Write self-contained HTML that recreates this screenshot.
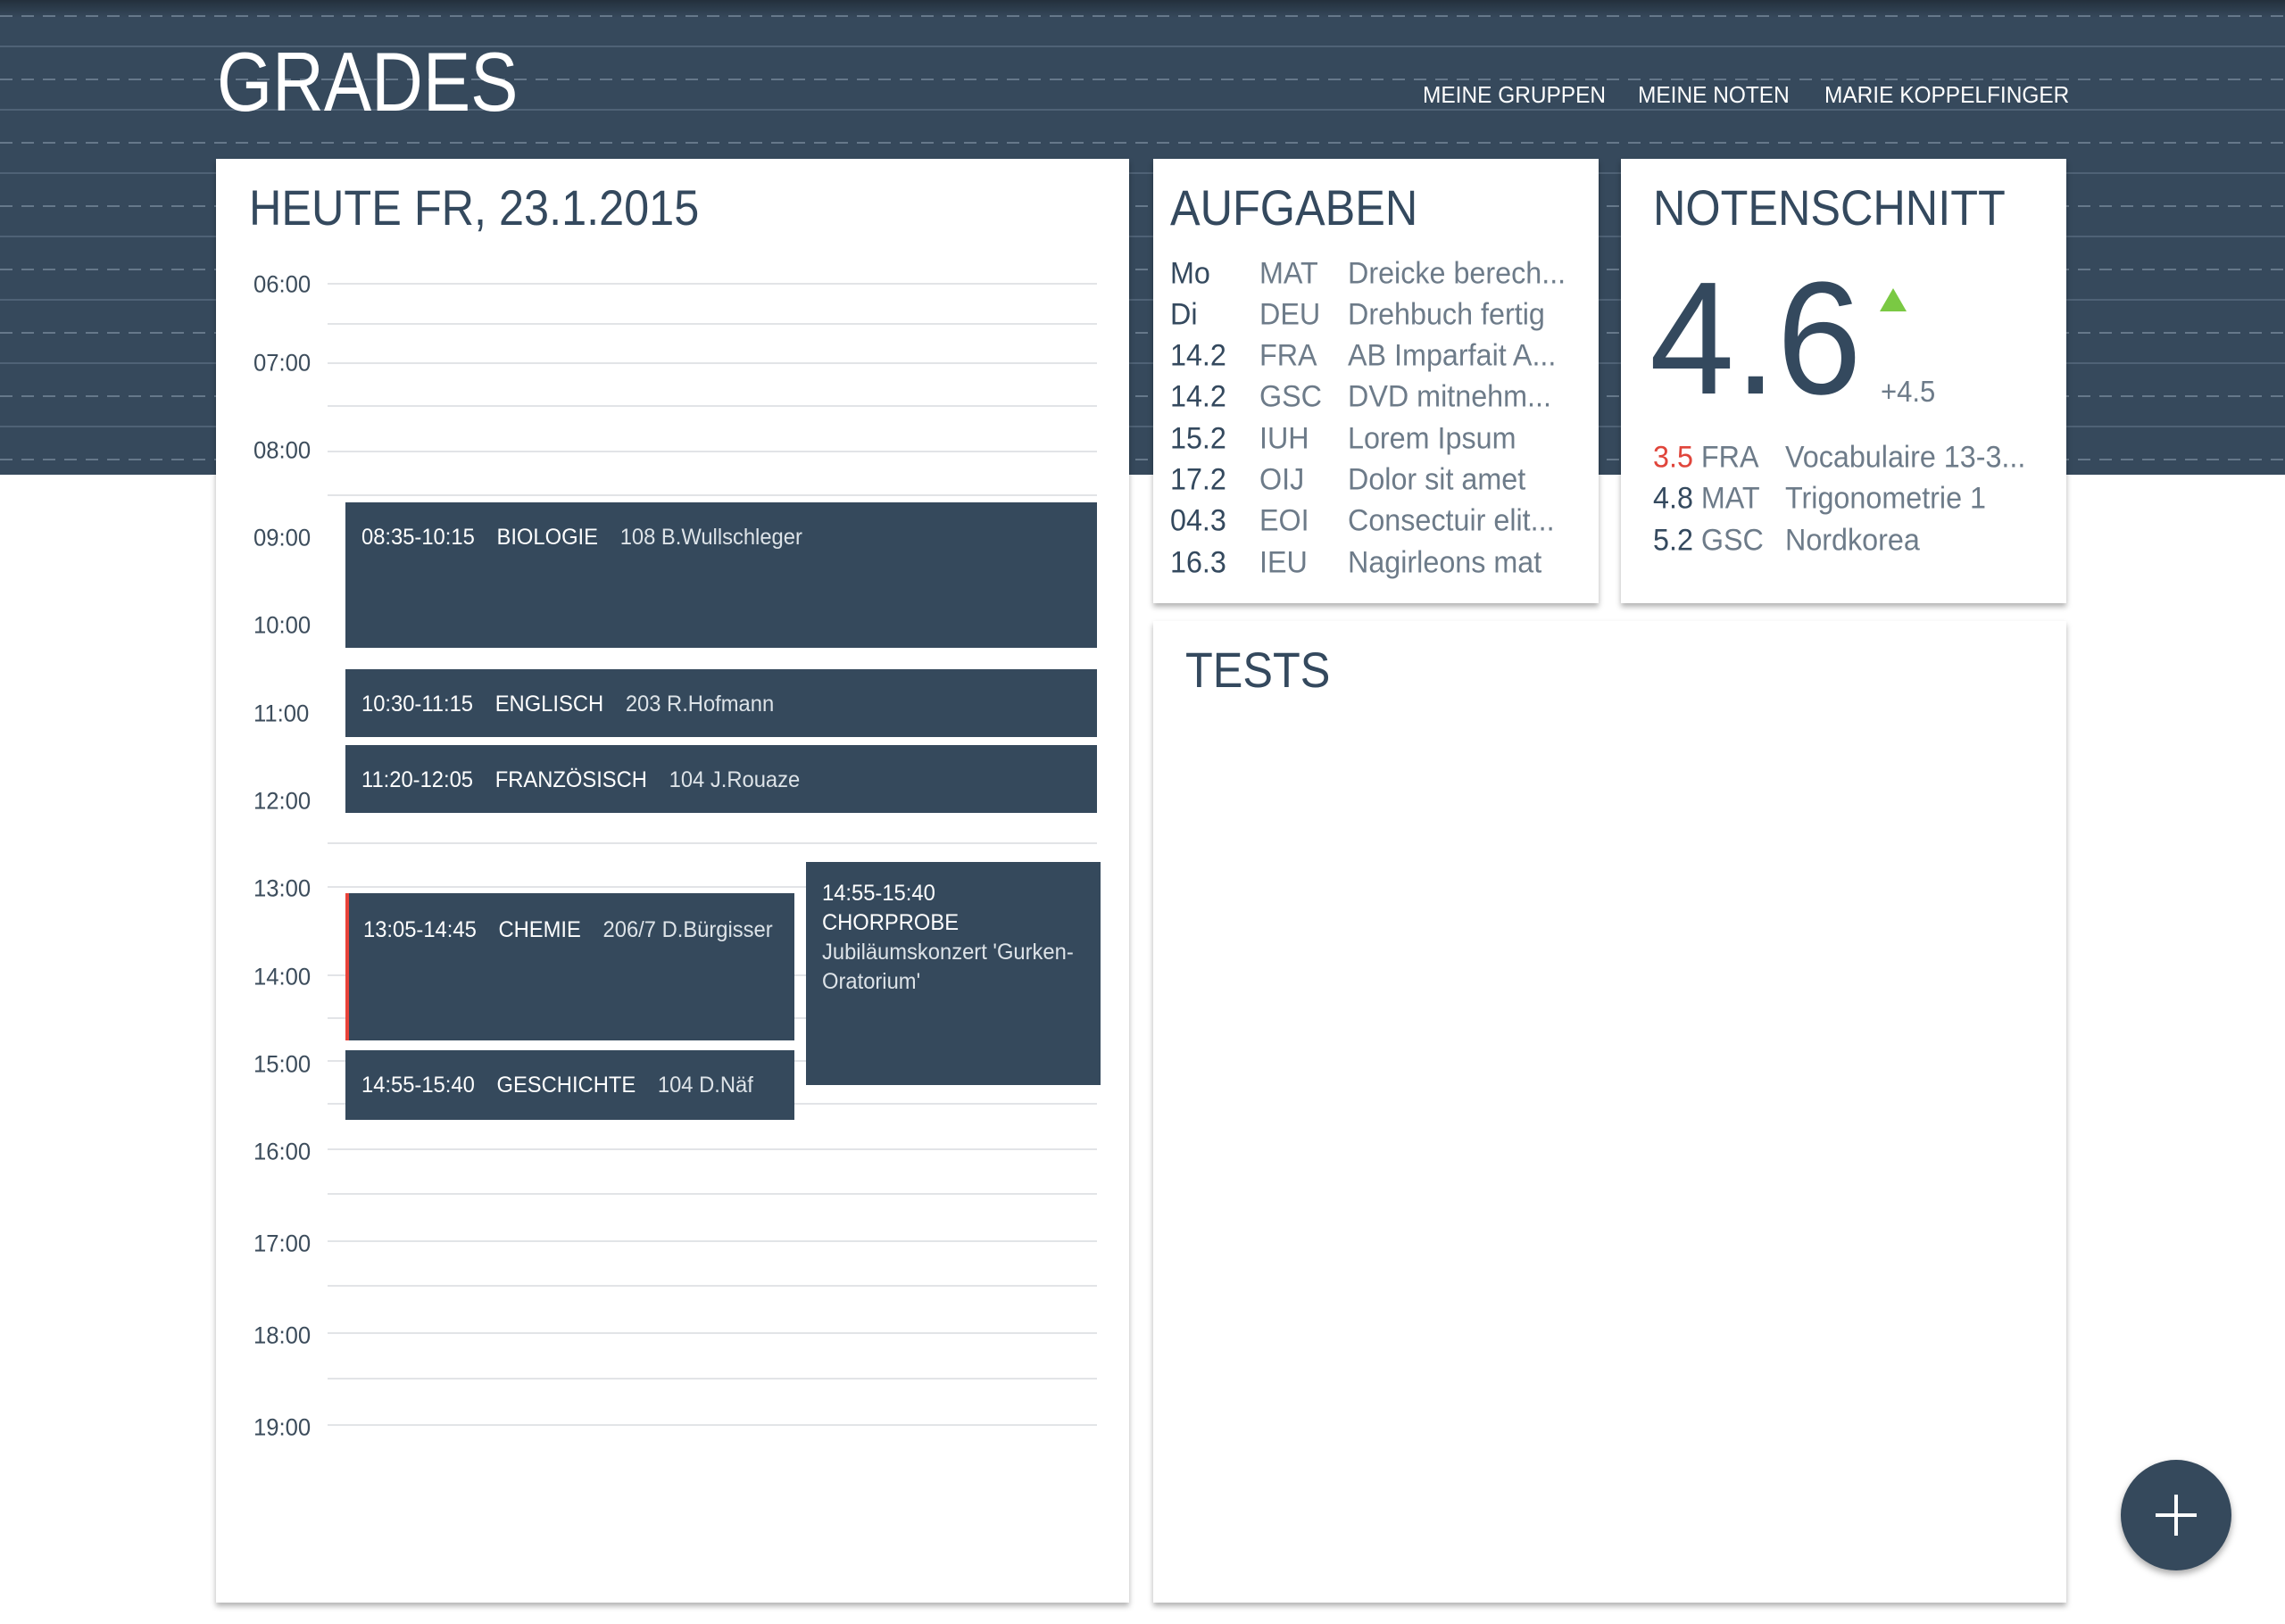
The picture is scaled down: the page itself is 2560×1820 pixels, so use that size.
<!DOCTYPE html>
<html><head><meta charset="utf-8"><style>
*{margin:0;padding:0;box-sizing:border-box}
body{width:2560px;height:1820px;background:#fff;position:relative;overflow:hidden;font-family:"Liberation Sans",sans-serif;color:#34495e}
.hdr{position:absolute;left:0;top:0;width:2560px;height:532px;background:#36495c;
background-image:linear-gradient(rgba(0,0,0,.35),rgba(0,0,0,0) 20px),repeating-linear-gradient(to bottom,transparent 0,transparent 51px,#4f6276 51px,#4f6276 53px,transparent 53px,transparent 71px);}
.dl{position:absolute;left:0;width:2560px;height:2px;background-image:repeating-linear-gradient(to right,#66788a 0,#66788a 14px,transparent 14px,transparent 24px)}
.abs{position:absolute;white-space:nowrap}
.sx{transform-origin:0 0}
.card{position:absolute;background:#fff;box-shadow:0 4px 6px rgba(0,0,0,.3)}
.h{font-size:56px;transform:scaleX(.9);transform-origin:0 0}
.tl{position:absolute;left:284px;font-size:27px;color:#3d4d5c;transform:translateY(-50%) scaleX(.95);transform-origin:0 50%}
.ln{position:absolute;left:367px;width:862px;height:2px;background:#e2e4e7}
.ev{position:absolute;background:#35495c;color:#fff;font-size:25px;padding-left:18px;white-space:nowrap;overflow:hidden}
.ev .in{display:inline-block;transform:scaleX(.95);transform-origin:0 0}
.ev span span{margin-right:26px}
.r{color:#dde3e8}
.row{position:absolute;font-size:34px;white-space:nowrap;transform:translateY(-50%) scaleX(.95);transform-origin:0 50%}
.g{color:#6d7b89}
</style></head><body>
<div class="hdr"></div>
<div class="dl" style="top:17px"></div><div class="dl" style="top:88px"></div><div class="dl" style="top:159px"></div><div class="dl" style="top:230px"></div><div class="dl" style="top:301px"></div><div class="dl" style="top:372px"></div><div class="dl" style="top:443px"></div><div class="dl" style="top:514px"></div>
<div class="abs sx" style="left:243px;top:38px;font-size:94px;color:#fff;transform:scaleX(.85)">GRADES</div>
<div class="abs sx" style="left:1594px;top:91px;font-size:26px;color:#fff;transform:scaleX(.94)">MEINE GRUPPEN</div>
<div class="abs sx" style="left:1835px;top:91px;font-size:26px;color:#fff;transform:scaleX(.94)">MEINE NOTEN</div>
<div class="abs sx" style="left:2044px;top:91px;font-size:26px;color:#fff;transform:scaleX(.94)">MARIE KOPPELFINGER</div>

<div class="card" style="left:242px;top:178px;width:1023px;height:1618px"></div>
<div class="abs h" style="left:279px;top:200px">HEUTE FR, 23.1.2015</div>

<div class="ln" style="top:317px"></div><div class="ln" style="top:362px"></div><div class="ln" style="top:406px"></div><div class="ln" style="top:454px"></div><div class="ln" style="top:505px"></div><div class="ln" style="top:554px"></div><div class="ln" style="top:944px"></div><div class="ln" style="top:993px"></div><div class="ln" style="top:1092px"></div><div class="ln" style="top:1140px"></div><div class="ln" style="top:1188px"></div><div class="ln" style="top:1236px"></div><div class="ln" style="top:1287px"></div><div class="ln" style="top:1337px"></div><div class="ln" style="top:1390px"></div><div class="ln" style="top:1440px"></div><div class="ln" style="top:1493px"></div><div class="ln" style="top:1544px"></div><div class="ln" style="top:1596px"></div>

<div class="tl" style="top:319px">06:00</div><div class="tl" style="top:407px">07:00</div><div class="tl" style="top:505px">08:00</div><div class="tl" style="top:603px">09:00</div><div class="tl" style="top:701px">10:00</div><div class="tl" style="top:800px">11:00</div><div class="tl" style="top:898px">12:00</div><div class="tl" style="top:996px">13:00</div><div class="tl" style="top:1095px">14:00</div><div class="tl" style="top:1193px">15:00</div><div class="tl" style="top:1291px">16:00</div><div class="tl" style="top:1394px">17:00</div><div class="tl" style="top:1497px">18:00</div><div class="tl" style="top:1600px">19:00</div>

<div class="ev" style="left:387px;top:563px;width:842px;height:163px;padding-top:25px"><span class="in"><span>08:35-10:15</span><span>BIOLOGIE</span><span class="r">108 B.Wullschleger</span></span></div>
<div class="ev" style="left:387px;top:750px;width:842px;height:76px;padding-top:25px"><span class="in"><span>10:30-11:15</span><span>ENGLISCH</span><span class="r">203 R.Hofmann</span></span></div>
<div class="ev" style="left:387px;top:835px;width:842px;height:76px;padding-top:25px"><span class="in"><span>11:20-12:05</span><span>FRANZÖSISCH</span><span class="r">104 J.Rouaze</span></span></div>
<div class="ev" style="left:387px;top:1001px;width:503px;height:165px;padding-top:27px;border-left:4px solid #e8433a;padding-left:16px"><span class="in"><span>13:05-14:45</span><span>CHEMIE</span><span class="r">206/7 D.Bürgisser</span></span></div>
<div class="ev" style="left:387px;top:1177px;width:503px;height:78px;padding-top:25px"><span class="in"><span>14:55-15:40</span><span>GESCHICHTE</span><span class="r">104 D.Näf</span></span></div>
<div class="ev" style="left:903px;top:966px;width:330px;height:250px;padding-top:19px;line-height:33px"><span class="in" style="transform:scaleX(.95)">14:55-15:40<br>CHORPROBE<br><span class="r" style="margin:0">Jubiläumskonzert 'Gurken-</span><br><span class="r" style="margin:0">Oratorium'</span></span></div>

<div class="card" style="left:1292px;top:178px;width:499px;height:498px"></div>
<div class="abs h" style="left:1311px;top:200px">AUFGABEN</div>
<div class="row" style="left:1311px;top:307px">Mo</div><div class="row g" style="left:1411px;top:307px">MAT</div><div class="row g" style="left:1510px;top:307px">Dreicke berech...</div>
<div class="row" style="left:1311px;top:353px">Di</div><div class="row g" style="left:1411px;top:353px">DEU</div><div class="row g" style="left:1510px;top:353px">Drehbuch fertig</div>
<div class="row" style="left:1311px;top:399px">14.2</div><div class="row g" style="left:1411px;top:399px">FRA</div><div class="row g" style="left:1510px;top:399px">AB Imparfait A...</div>
<div class="row" style="left:1311px;top:445px">14.2</div><div class="row g" style="left:1411px;top:445px">GSC</div><div class="row g" style="left:1510px;top:445px">DVD mitnehm...</div>
<div class="row" style="left:1311px;top:492px">15.2</div><div class="row g" style="left:1411px;top:492px">IUH</div><div class="row g" style="left:1510px;top:492px">Lorem Ipsum</div>
<div class="row" style="left:1311px;top:538px">17.2</div><div class="row g" style="left:1411px;top:538px">OIJ</div><div class="row g" style="left:1510px;top:538px">Dolor sit amet</div>
<div class="row" style="left:1311px;top:584px">04.3</div><div class="row g" style="left:1411px;top:584px">EOI</div><div class="row g" style="left:1510px;top:584px">Consectuir elit...</div>
<div class="row" style="left:1311px;top:631px">16.3</div><div class="row g" style="left:1411px;top:631px">IEU</div><div class="row g" style="left:1510px;top:631px">Nagirleons mat</div>

<div class="card" style="left:1816px;top:178px;width:499px;height:498px"></div>
<div class="abs h" style="left:1852px;top:200px">NOTENSCHNITT</div>
<div class="abs sx" style="left:1848px;top:290px;font-size:180px;line-height:1;transform:scaleX(.95)">4.6</div>
<div class="abs" style="left:2106px;top:323px;width:0;height:0;border-left:15px solid transparent;border-right:15px solid transparent;border-bottom:26px solid #7ac943"></div>
<div class="abs g sx" style="left:2107px;top:420px;font-size:33px;transform:scaleX(.94)">+4.5</div>
<div class="row" style="left:1852px;top:513px"><span style="color:#e0453b">3.5</span> <span class="g">FRA</span></div><div class="row g" style="left:2000px;top:513px">Vocabulaire 13-3...</div>
<div class="row" style="left:1852px;top:559px">4.8 <span class="g">MAT</span></div><div class="row g" style="left:2000px;top:559px">Trigonometrie 1</div>
<div class="row" style="left:1852px;top:606px">5.2 <span class="g">GSC</span></div><div class="row g" style="left:2000px;top:606px">Nordkorea</div>

<div class="card" style="left:1292px;top:696px;width:1023px;height:1100px"></div>
<div class="abs h" style="left:1328px;top:718px">TESTS</div>

<div class="abs" style="left:2376px;top:1636px;width:124px;height:124px;border-radius:50%;background:#35495c;box-shadow:0 4px 8px rgba(0,0,0,.35)"></div>
<div class="abs" style="left:2415px;top:1696px;width:46px;height:4px;background:#fff"></div>
<div class="abs" style="left:2436px;top:1675px;width:4px;height:46px;background:#fff"></div>
</body></html>
